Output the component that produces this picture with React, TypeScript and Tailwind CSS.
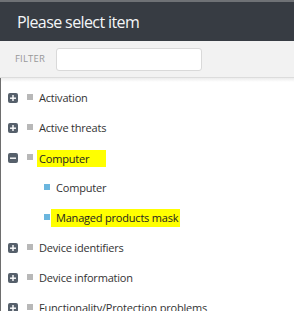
import React from "react";

const font = { fontFamily: '"Open Sans", "Noto Sans", sans-serif' };

function PlusBox({ minus }: { minus?: boolean }) {
  return (
    <div className="w-[10px] h-[10px] rounded-[2px] bg-[#56606b] flex items-center justify-center shrink-0">
      <svg width="10" height="10" viewBox="0 0 10 10">
        <rect x="2" y="4.5" width="6" height="1.4" fill="#fff" />
        {!minus && <rect x="4.3" y="2" width="1.4" height="6" fill="#fff" />}
      </svg>
    </div>
  );
}

function Row({ label, minus, hl }: { label: string; minus?: boolean; hl?: boolean }) {
  return (
    <div className="h-[30px] flex items-center pl-[7px]">
      <PlusBox minus={minus} />
      <div className="w-[6px] h-[6px] bg-[#b8b8b8] ml-[9px] -mt-[2px] shrink-0" />
      {hl ? (
        <span className="ml-[4px] pl-[2px] pr-[17px] h-[17px] leading-[17px] bg-[#ffff00] text-[11px] tracking-[-0.2px] text-[#222]">{label}</span>
      ) : (
        <span className="ml-[6px] text-[11px] tracking-[-0.2px] text-[#333]">{label}</span>
      )}
    </div>
  );
}

function Child({ label, hl }: { label: string; hl?: boolean }) {
  return (
    <div className="h-[30px] flex items-center pl-[43px]">
      <div className="w-[6px] h-[6px] bg-[#6bb6de] -mt-[2px] shrink-0" />
      {hl ? (
        <span className="ml-[1px] pl-[5px] pr-[2px] h-[18px] leading-[18px] bg-[#ffff00] text-[11px] tracking-[-0.2px] text-[#222]">{label}</span>
      ) : (
        <span className="ml-[6px] text-[11px] tracking-[-0.2px] text-[#333]">{label}</span>
      )}
    </div>
  );
}

export default function App() {
  return (
    <div className="w-[294px] h-[311px] overflow-hidden bg-white flex flex-col" style={font}>
      <div className="h-[41px] bg-[#373c43] border-t-2 border-[#6f7276] flex items-center pl-[17px] shrink-0">
        <span className="text-[16px] tracking-[-0.6px] text-[#f4f6f8] leading-none">Please select item</span>
      </div>
      <div className="h-[37px] bg-[#f2f2f2] border-b border-[#dcdcdc] flex items-center pl-[15px] shrink-0">
        <span className="text-[9.5px] text-[#999] tracking-[0.2px]">FILTER</span>
        <div className="ml-[11px] w-[146px] h-[23px] bg-white border border-[#d9d9d9] rounded-[3px]" />
      </div>
      <div className="flex-1 border-l border-[#6e6e6e] relative pt-[5px]">
        <div className="absolute left-0 right-0 top-0 h-[4px] bg-gradient-to-b from-[#ececec] to-white" />
        <div className="relative">
          <Row label="Activation" />
          <Row label="Active threats" />
          <Row label="Computer" minus hl />
          <Child label="Computer" />
          <Child label="Managed products mask" hl />
          <Row label="Device identifiers" />
          <Row label="Device information" />
          <Row label="Functionality/Protection problems" />
        </div>
      </div>
    </div>
  );
}
